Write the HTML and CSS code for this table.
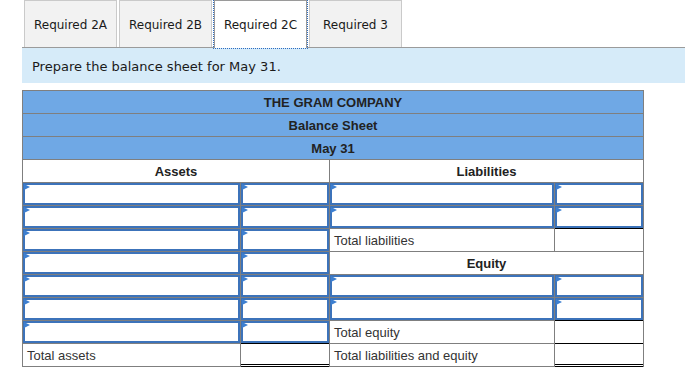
FILE: index.html
```html
<!DOCTYPE html>
<html>
<head>
<meta charset="utf-8">
<link rel="stylesheet" href="styles.css">
</head>
<body>
<div class="page">
  <div class="tabs">
    <div class="tab">Required 2A</div>
    <div class="tab">Required 2B</div>
    <div class="tab active">Required 2C</div>
    <div class="tab">Required 3</div>
  </div>
  <div class="bar">Prepare the balance sheet for May 31.</div>
  <div class="sheet">
    <div class="head span4">THE GRAM COMPANY</div>
    <div class="head span4">Balance Sheet</div>
    <div class="head span4">May 31</div>
    <div class="colhead span2">Assets</div>
    <div class="colhead span2">Liabilities</div>

    <div class="cell"><div class="inp"></div></div>
    <div class="cell"><div class="inp"></div></div>
    <div class="cell"><div class="inp"></div></div>
    <div class="cell"><div class="inp"></div></div>

    <div class="cell"><div class="inp"></div></div>
    <div class="cell"><div class="inp"></div></div>
    <div class="cell"><div class="inp"></div></div>
    <div class="cell"><div class="inp"></div></div>

    <div class="cell"><div class="inp"></div></div>
    <div class="cell"><div class="inp"></div></div>
    <div class="cell label">Total liabilities</div>
    <div class="cell total"></div>

    <div class="cell"><div class="inp"></div></div>
    <div class="cell"><div class="inp"></div></div>
    <div class="colhead span2">Equity</div>

    <div class="cell"><div class="inp"></div></div>
    <div class="cell"><div class="inp"></div></div>
    <div class="cell"><div class="inp"></div></div>
    <div class="cell"><div class="inp"></div></div>

    <div class="cell"><div class="inp"></div></div>
    <div class="cell"><div class="inp"></div></div>
    <div class="cell"><div class="inp"></div></div>
    <div class="cell"><div class="inp"></div></div>

    <div class="cell"><div class="inp"></div></div>
    <div class="cell"><div class="inp"></div></div>
    <div class="cell label">Total equity</div>
    <div class="cell total"></div>

    <div class="cell label">Total assets</div>
    <div class="cell total grand"></div>
    <div class="cell label">Total liabilities and equity</div>
    <div class="cell total grand"></div>
  </div>
</div>
</body>
</html>
```

FILE: styles.css
```css
html, body {
  margin: 0;
  padding: 0;
  background: #fff;
}

.page {
  padding-left: 22px;
  font-family: "DejaVu Sans", Verdana, sans-serif;
  font-size: 12px;
  color: #1a1a1a;
}

.tabs {
  display: flex;
  gap: 2px;
  padding-left: 2px;
  height: 47px;
}

.tab {
  box-sizing: border-box;
  width: 93px;
  height: 47px;
  background: #f2f2f2;
  border: 1px solid #cacaca;
  border-bottom: none;
  text-align: center;
  padding-top: 2px;
  line-height: 44px;
  white-space: nowrap;
}

.tab.active {
  position: relative;
  z-index: 1;
  height: 48px;
  background: #fff;
  border-color: #9a9a9a;
  outline: 1px dotted #2d6cc0;
}

.bar {
  background: #d6ebf9;
  border-top: 1px solid #9b9b9b;
  padding: 3px 10px 0;
  line-height: 32px;
  height: 32px;
  font-size: 13px;
}

.sheet {
  margin-top: 7px;
  display: grid;
  grid-template-columns: 217px 88px 224px 88px;
  grid-auto-rows: 22px;
  gap: 1px;
  padding: 1px;
  background: #7f7f7f;
  width: max-content;
  font-family: "Liberation Sans", Arial, sans-serif;
  font-size: 13px;
  color: #333;
}

.head {
  background: #6fa8e5;
  color: #222;
  font-weight: bold;
  text-align: center;
  line-height: 24px;
}

.colhead {
  background: #fff;
  color: #222;
  font-weight: bold;
  text-align: center;
  line-height: 24px;
}

.span4 { grid-column: span 4; }
.span2 { grid-column: span 2; }

.cell {
  background: #fff;
  position: relative;
}

.label {
  padding-left: 4px;
  line-height: 24px;
  white-space: nowrap;
}

.total {
  border-top: 1px solid #000;
  margin-top: -1px;
}

.total.grand {
  border-bottom: 3px double #000;
  margin-bottom: -1px;
}

.inp {
  box-sizing: border-box;
  height: 22px;
  border: 2px solid #3c73ba;
  background: #fff;
  position: relative;
}

.inp::before {
  content: "";
  position: absolute;
  left: -1px;
  top: -1px;
  width: 0;
  height: 0;
  border-left: 6px solid #3d7fd0;
  border-top: 3.5px solid transparent;
  border-bottom: 3.5px solid transparent;
}
```
